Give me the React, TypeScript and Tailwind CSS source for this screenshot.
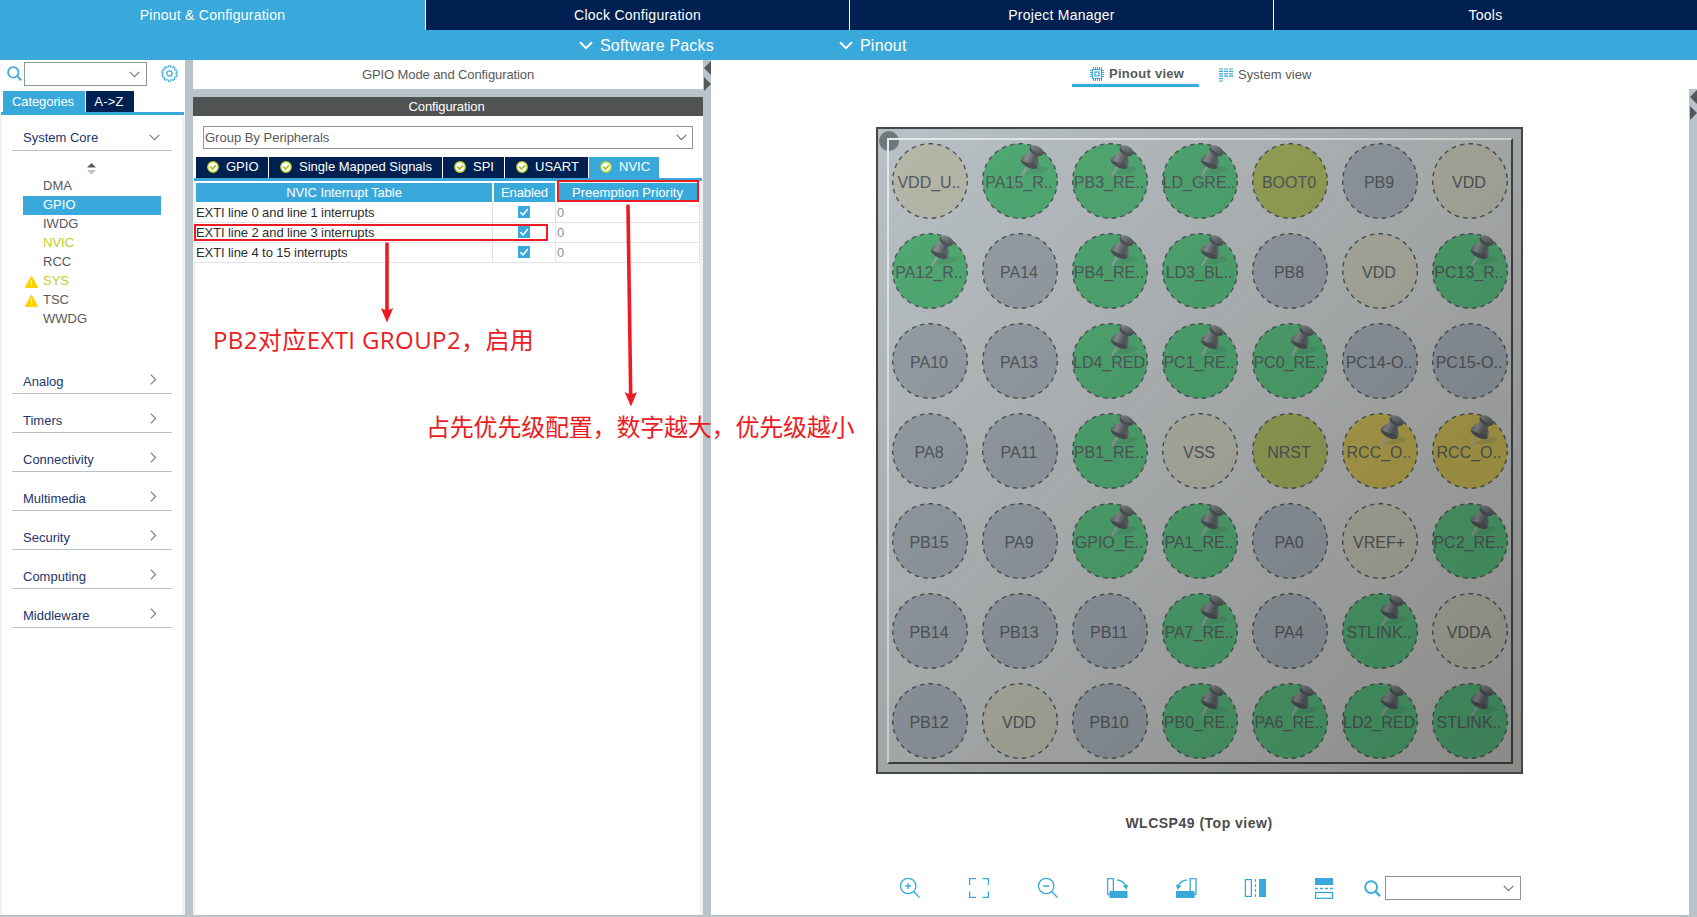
import type { ReactNode } from "react";
import clsx from "clsx";

const mainTabs = ["Clock Configuration", "Project Manager", "Tools"];

const coreItems = [
  { name: "DMA" },
  { name: "GPIO", selected: true },
  { name: "IWDG" },
  { name: "NVIC", configured: true },
  { name: "RCC" },
  { name: "SYS", configured: true, warning: true },
  { name: "TSC", warning: true },
  { name: "WWDG" },
];

const categories = ["Analog", "Timers", "Connectivity", "Multimedia", "Security", "Computing", "Middleware"];

const peripheralTabs = [
  { name: "GPIO", width: "w-[72px]" },
  { name: "Single Mapped Signals", width: "w-[173px]" },
  { name: "SPI", width: "w-[61px]" },
  { name: "USART", width: "w-[83px]" },
  { name: "NVIC", width: "w-[70px]", active: true },
];

const interrupts = [
  "EXTI line 0 and line 1 interrupts",
  "EXTI line 2 and line 3 interrupts",
  "EXTI line 4 to 15 interrupts",
];

// Fill per pin kind: free, used signal, power, boot/reset, reserved oscillator
const pinColors = {
  n: "#99a1a9",
  g: "#52ac75",
  p: "#b7b7aa",
  b: "#9ca859",
  o: "#bbab50",
};

type Kind = keyof typeof pinColors;

const pins: [string, Kind][] = [
  ["VDD_U..", "p"], ["PA15_R..", "g"], ["PB3_RE..", "g"], ["LD_GRE..", "g"], ["BOOT0", "b"], ["PB9", "n"], ["VDD", "p"],
  ["PA12_R..", "g"], ["PA14", "n"], ["PB4_RE..", "g"], ["LD3_BL..", "g"], ["PB8", "n"], ["VDD", "p"], ["PC13_R..", "g"],
  ["PA10", "n"], ["PA13", "n"], ["LD4_RED", "g"], ["PC1_RE..", "g"], ["PC0_RE..", "g"], ["PC14-O..", "n"], ["PC15-O..", "n"],
  ["PA8", "n"], ["PA11", "n"], ["PB1_RE..", "g"], ["VSS", "p"], ["NRST", "b"], ["RCC_O..", "o"], ["RCC_O..", "o"],
  ["PB15", "n"], ["PA9", "n"], ["GPIO_E..", "g"], ["PA1_RE..", "g"], ["PA0", "n"], ["VREF+", "p"], ["PC2_RE..", "g"],
  ["PB14", "n"], ["PB13", "n"], ["PB11", "n"], ["PA7_RE..", "g"], ["PA4", "n"], ["STLINK..", "g"], ["VDDA", "p"],
  ["PB12", "n"], ["VDD", "p"], ["PB10", "n"], ["PB0_RE..", "g"], ["PA6_RE..", "g"], ["LD2_RED", "g"], ["STLINK..", "g"],
];

function ChevronDown({ className }: { className?: string }) {
  return (
    <svg className={clsx("w-[11px] h-[7px] shrink-0", className)} viewBox="0 0 11 7" fill="none" stroke="currentColor">
      <path d="M0.7 0.8 L5.5 5.6 L10.3 0.8" strokeWidth="1.2" />
    </svg>
  );
}

function ChevronRight() {
  return (
    <svg className="w-[7px] h-[11px] text-[#7d7d7d]" viewBox="0 0 7 11" fill="none" stroke="currentColor" strokeWidth="1.2">
      <path d="M0.8 0.6 L5.6 5.5 L0.8 10.4" />
    </svg>
  );
}

function MenuChevron() {
  return (
    <svg className="w-[14px] h-[9px]" viewBox="0 0 14 9" fill="none" stroke="white" strokeWidth="2">
      <path d="M1 1.2 L7 7.2 L13 1.2" />
    </svg>
  );
}

function SearchIcon({ className }: { className?: string }) {
  return (
    <svg className={clsx("shrink-0", className)} viewBox="0 0 16 16" fill="none" stroke="#39a9dc" strokeWidth="1.8">
      <circle cx="6.7" cy="6.7" r="5.6" />
      <path d="M10.8 10.8 L15.2 15.2" strokeWidth="2.2" />
    </svg>
  );
}

function GearIcon() {
  const teeth = Array.from({ length: 10 }, (_, i) => i * 36);
  return (
    <svg className="w-[17px] h-[17px]" viewBox="0 0 17 17" fill="none" stroke="#39a9dc" strokeWidth="1.1">
      {teeth.map((a) => (
        <path key={a} d="M6.9 2.7 L7.4 0.8 H9.6 L10.1 2.7" transform={`rotate(${a} 8.5 8.5)`} />
      ))}
      <circle cx="8.5" cy="8.5" r="2.7" strokeWidth="1.2" />
    </svg>
  );
}

function WarningIcon() {
  return (
    <svg className="w-[13px] h-[12px]" viewBox="0 0 13 12">
      <path d="M6.5 0.8 L12.2 11.2 H0.8 Z" fill="#ffd200" stroke="#ffd200" strokeWidth="1.4" strokeLinejoin="round" />
      <path d="M6.5 4 V7.8 M6.5 8.8 V10" stroke="white" strokeWidth="1.1" />
    </svg>
  );
}

function CheckBadge() {
  return (
    <svg className="w-[12px] h-[12px] shrink-0" viewBox="0 0 12 12" fill="none">
      <circle cx="6" cy="6" r="5.2" fill="white" stroke="#bccf2b" strokeWidth="1.4" />
      <path d="M3.2 5.6 L5.5 8 L9 4.4" stroke="#a9bf1c" strokeWidth="1.6" />
    </svg>
  );
}

function Checkbox() {
  return (
    <svg className="w-[12px] h-[12px]" viewBox="0 0 12 12" fill="none">
      <rect width="12" height="12" fill="#39a9dc" />
      <path d="M2.4 6.3 L5 8.9 L9.8 3" stroke="white" strokeWidth="1.5" />
    </svg>
  );
}

function SplitArrows({ className }: { className?: string }) {
  return (
    <svg className={clsx("w-[8px] h-[32px]", className)} viewBox="0 0 8 32" fill="#54585b">
      <path d="M8 1 V15 L1 8 Z" />
      <path d="M1 17 V31 L8 24 Z" />
    </svg>
  );
}

function PushPin() {
  return (
    <svg className="absolute left-[44px] top-[8px] w-[32px] h-[34px]" viewBox="0 0 32 34">
      <defs>
        <linearGradient id="pinBody" x1="0" y1="0.2" x2="1" y2="0.6">
          <stop offset="0" stopColor="#4f5659" />
          <stop offset="0.35" stopColor="#8d9295" />
          <stop offset="0.7" stopColor="#565c5f" />
          <stop offset="1" stopColor="#6a7073" />
        </linearGradient>
        <linearGradient id="pinCap" x1="0" y1="0" x2="1" y2="0.4">
          <stop offset="0" stopColor="#8b9093" />
          <stop offset="1" stopColor="#5a6063" />
        </linearGradient>
      </defs>
      <path d="M5 31 L14 24 Q24 20 29 25 Q24 31 10 30 Z" fill="#3d5a4a" opacity="0.16" />
      <path d="M2.8 31.5 L8.5 22" stroke="#9ea3a6" strokeWidth="2" />
      <path
        d="M1.6 16 Q3.5 11 9 9.5 L11.5 5 L21.5 9.5 L18.6 14 Q21 20 18 24.5 Q12 26 6 21.8 Q2 19 1.6 16 Z"
        fill="url(#pinBody)"
      />
      <path d="M1.6 16 Q2 19 6 21.8 Q12 26 18 24.5 Q18.5 22.5 16 20.5 Q8 19 1.6 16 Z" fill="#4d5457" />
      <ellipse cx="17.4" cy="7" rx="7.4" ry="4.3" transform="rotate(26 17.4 7)" fill="#50575a" />
      <ellipse cx="18" cy="5.4" rx="6.6" ry="3.2" transform="rotate(26 18 5.4)" fill="url(#pinCap)" />
    </svg>
  );
}

function Pin({ label, kind }: { label: string; kind: Kind }) {
  return (
    <div className="relative w-[90px] h-[90px] flex items-center justify-center">
      <svg className="absolute left-[7px] top-[7px] w-[76px] h-[76px]" viewBox="0 0 76 76">
        <circle cx="38" cy="38" r="37.3" fill={pinColors[kind]} stroke="#4f5457" strokeWidth="1.4" strokeDasharray="4.5 4.2" />
      </svg>
      {(kind === "g" || kind === "o") && <PushPin />}
      <span className="relative top-[2px] right-[1px] text-[16px] leading-none text-[#545b5e] whitespace-nowrap">{label}</span>
    </div>
  );
}

function ToolIcon({ children }: { children: ReactNode }) {
  return (
    <svg className="w-[22px] h-[22px]" viewBox="0 0 22 22" fill="none" stroke="#39a9dc" strokeWidth="1.3">
      {children}
    </svg>
  );
}

function Header() {
  return (
    <header className="text-white">
      <div className="flex h-[30px] text-[14px] leading-[30px] tracking-[0.25px] text-center">
        <div className="w-[425px] bg-[#39a9dc]">Pinout &amp; Configuration</div>
        {mainTabs.map((tab) => (
          <div key={tab} className="w-[424px] bg-[#002052] border-l border-white">
            {tab}
          </div>
        ))}
      </div>
      <div className="flex h-[30px] items-center bg-[#39a9dc] pl-[579px] pt-[1px] text-[16px] tracking-[0.2px]">
        <div className="flex items-center gap-[7px] w-[260px]">
          <MenuChevron />
          <span>Software Packs</span>
        </div>
        <div className="flex items-center gap-[7px]">
          <MenuChevron />
          <span>Pinout</span>
        </div>
      </div>
    </header>
  );
}

function Sidebar() {
  return (
    <aside className="w-[185px] flex flex-col">
      <div className="flex items-start h-[31px] pt-[2px] pl-[7px]">
        <SearchIcon className="w-[15px] h-[15px] mt-[4px]" />
        <div className="ml-[2px] w-[123px] h-[24px] border border-[#8d969c] flex items-center justify-end pr-[6px]">
          <ChevronDown className="text-[#70777c]" />
        </div>
        <div className="ml-[14px] mt-[3px]">
          <GearIcon />
        </div>
      </div>
      <div className="flex gap-px pl-[3px] h-[21px] text-white text-[13px] leading-[21px] text-center">
        <div className="w-[82px] bg-[#39a9dc] tracking-[-0.1px] pr-[2px]">Categories</div>
        <div className="w-[48px] bg-[#002052] tracking-[0.2px] pr-[2px]">A-&gt;Z</div>
      </div>
      <div className="h-[3px] ml-[1px] mr-[1px] bg-[#39a9dc]" />
      <div className="grow border-l-2 border-r-[3px] border-[#f0f1f2] pl-[10px] pr-[10px]">
        <div className="h-[36px] border-b border-[#b5c1c8] flex items-center justify-between pl-[11px] pr-[12px] text-[13px] text-[#23356d]">
          <span className="pt-[11px]">System Core</span>
          <span className="pt-[9px]">
            <ChevronDown className="block text-[#7d7d7d]" />
          </span>
        </div>
        <div className="flex justify-center pt-[12px] h-[26px] pr-[1px]">
          <svg className="w-[9px] h-[12px]" viewBox="0 0 9 12">
            <path d="M4.5 0 L9 4.5 H0 Z" fill="#585858" />
            <path d="M0 7 H9 L4.5 11.5 Z" fill="#c0c0c0" />
          </svg>
        </div>
        {coreItems.map((item) => (
          <div
            key={item.name}
            className={clsx(
              "h-[19px] ml-[11px] w-[138px] flex items-center text-[13px] leading-[18px]",
              item.selected ? "bg-[#39a9dc] text-white" : item.configured ? "text-[#bccf2b]" : "text-[#58595b]"
            )}
          >
            <span className="w-[20px] pl-[2px] pt-px">{item.warning && <WarningIcon />}</span>
            <span className="h-[19px]">{item.name}</span>
          </div>
        ))}
        <div className="h-[26px]" />
        {categories.map((name) => (
          <div
            key={name}
            className="h-[39px] border-b border-[#b5c1c8] flex items-end justify-between pl-[11px] pr-[15px] text-[13px] leading-[15px] text-[#23356d]"
          >
            <span className="pb-[4px]">{name}</span>
            <span className="pb-[8px]">
              <ChevronRight />
            </span>
          </div>
        ))}
      </div>
    </aside>
  );
}

function ConfigPanel() {
  return (
    <section className="w-[510px] flex flex-col text-[13px]">
      <div className="h-[29px] leading-[29px] text-center text-[#58595b] tracking-[-0.1px]">GPIO Mode and Configuration</div>
      <div className="h-[8px] bg-[#b8c4ca]" />
      <div className="h-[19px] leading-[19px] bg-[#515252] text-white text-center tracking-[-0.1px] pr-[3px]">Configuration</div>
      <div className="mt-[10px] ml-[10px] w-[490px] h-[23px] border border-[#8d969c] flex items-center justify-between pl-[1px] pr-[5px] text-[#58595b]">
        <span>Group By Peripherals</span>
        <ChevronDown className="text-[#70777c]" />
      </div>
      <div className="mt-[8px] flex gap-px pl-[3px] text-white">
        {peripheralTabs.map((tab) => (
          <div
            key={tab.name}
            className={clsx(
              "h-[21px] flex items-center gap-[7px] pl-[11px] pb-px leading-[20px] whitespace-nowrap",
              tab.width,
              tab.active ? "bg-[#39a9dc]" : "bg-[#002052]"
            )}
          >
            <CheckBadge />
            <span>{tab.name}</span>
          </div>
        ))}
      </div>
      <div className="ml-[1px] mr-[1px] h-[3px] bg-[#39a9dc]" />
      <div className="grow border-l-2 border-r-[3px] border-[#f0f1f2] pt-[2px]">
        <div className="grid grid-cols-[296px_61px_141px] gap-[2px] pl-[1px] pb-[1px] text-white text-center leading-[19px]">
          <div className="bg-[#39a9dc] tracking-[-0.1px]">NVIC Interrupt Table</div>
          <div className="bg-[#39a9dc] tracking-[-0.1px]">Enabled</div>
          <div className="bg-[#39a9dc] tracking-[0.02px]">Preemption Priority</div>
        </div>
        {interrupts.map((name) => (
          <div
            key={name}
            className="grid grid-cols-[298px_63px_144px] h-[20px] border-b border-[#e1e4e6] leading-[19px] text-[#2e2e2e]"
          >
            <div className="pl-[1px] tracking-[-0.09px] border-r border-[#e1e4e6]">{name}</div>
            <div className="pl-[25px] pt-[3px] border-r border-[#e1e4e6]">
              <Checkbox />
            </div>
            <div className="pl-[1px] text-[#8f9396] border-r border-[#e1e4e6]">0</div>
          </div>
        ))}
      </div>
    </section>
  );
}

function Chip() {
  return (
    <div className="relative w-[647px] h-[647px] border-2 border-[#43484a] p-[7px] bg-linear-to-br from-[#b9c1c6] to-[#bdbdb9]">
      <div className="absolute left-[1px] top-[2px] w-[20px] h-[20px] rounded-full bg-[#71787d]" />
      <div className="absolute left-[9px] top-[9px] w-[626px] h-[626px] border-2 border-t-[#e6eaeb] border-l-[#e6eaeb] border-r-[#444849] border-b-[#444849]" />
      <div className="relative grid grid-cols-7 w-[630px]">
        {pins.map(([label, kind], i) => (
          <Pin key={i} label={label} kind={kind} />
        ))}
      </div>
      <div className="absolute inset-0 bg-linear-to-br from-black/0 to-black/27" />
    </div>
  );
}

function PinoutView() {
  return (
    <main className="w-[978px] pl-[165px] text-[13px] text-[#58595b]">
      <div className="flex pl-[196px] h-[27px]">
        <div className="w-[127px] border-b-[3px] border-[#39a9dc] flex items-center gap-[5px] pl-[18px] pt-[4px] font-bold tracking-[0.27px]">
          <svg className="w-[14px] h-[14px]" viewBox="0 0 14 14" fill="none" stroke="#39a9dc">
            <rect x="2.5" y="2.5" width="9" height="9" />
            <rect x="5" y="5" width="4" height="4" strokeWidth="1.2" />
            <path d="M3.5 0V2M5.5 0V2M7.5 0V2M9.5 0V2M11.5 0V2M3.5 12V14M5.5 12V14M7.5 12V14M9.5 12V14M11.5 12V14" />
            <path d="M0 3.5H2M0 5.5H2M0 7.5H2M0 9.5H2M12 3.5H14M12 5.5H14M12 7.5H14M12 9.5H14" />
          </svg>
          <span>Pinout view</span>
        </div>
        <div className="flex items-center gap-[5px] pl-[20px] pt-[2px] tracking-[0.05px]">
          <svg className="w-[14px] h-[14px]" viewBox="0 0 14 14" stroke="#39a9dc" strokeWidth="1.2">
            <path d="M0 1H4M5 1H9M10 1H14M0 3.4H4M5 3.4H9M10 3.4H14M0 5.8H4M5 5.8H9M10 5.8H14M0 8.2H4M5 8.2H9M10 8.2H14M0 10.6H4M0 13H4" />
          </svg>
          <span>System view</span>
        </div>
      </div>
      <div className="h-[40px]" />
      <Chip />
      <div className="mt-[41px] w-[646px] h-[18px] leading-[17px] text-center text-[14px] font-bold tracking-[0.5px] text-[#4c4c4c]">
        WLCSP49 (Top view)
      </div>
      <div className="flex items-center mt-[43px] h-[24px] pl-[23px]">
        <div className="flex gap-[47px]">
          <ToolIcon>
            <circle cx="9.2" cy="9" r="7.7" />
            <path d="M6.2 9H12.2M9.2 6V12M14.6 14.5L20.5 20.5" />
          </ToolIcon>
          <ToolIcon>
            <path d="M1.6 8V1.6H8M14.5 1.6H20.4V8M20.4 14.5V20.4H14.5M8 20.4H1.6V14.5" />
          </ToolIcon>
          <ToolIcon>
            <circle cx="9.2" cy="9" r="7.7" />
            <path d="M6.2 9H12.2M14.6 14.5L20.5 20.5" />
          </ToolIcon>
          <ToolIcon>
            <path d="M1.6 17.5V1.6H7.4V14M1.6 17.5H4" />
            <rect x="3.5" y="14" width="18" height="7" fill="#39a9dc" stroke="none" />
            <path d="M11 3Q18 3.5 19.6 9.5" />
            <path d="M16.8 8.5L22 7.5L20.6 13Z" fill="#39a9dc" stroke="none" />
          </ToolIcon>
          <ToolIcon>
            <path d="M21 17.5V1.6H15.2V14M21 17.5H19" />
            <rect x="1" y="14" width="18.5" height="7" fill="#39a9dc" stroke="none" />
            <path d="M12 3Q5 3.5 3.3 9.5" />
            <path d="M6.3 8.5L0.9 7.5L2.5 13Z" fill="#39a9dc" stroke="none" />
          </ToolIcon>
          <ToolIcon>
            <rect x="1.4" y="2.6" width="6" height="16.8" />
            <path d="M11.5 2V20" strokeDasharray="3 2" />
            <rect x="15" y="2" width="7" height="18" fill="#39a9dc" stroke="none" />
          </ToolIcon>
          <ToolIcon>
            <rect x="2" y="1" width="18" height="7" fill="#39a9dc" stroke="none" />
            <path d="M2 11.5H20" strokeDasharray="3 2" />
            <rect x="2.6" y="15.5" width="16.8" height="5.8" />
          </ToolIcon>
        </div>
        <SearchIcon className="w-[17px] h-[17px] ml-[29px]" />
        <div className="ml-[4px] w-[136px] h-[24px] border border-[#8d969c] flex items-center justify-end pr-[6px]">
          <ChevronDown className="text-[#70777c]" />
        </div>
      </div>
    </main>
  );
}

// Red markup drawn over the panels
function Annotations() {
  return (
    <div className="absolute inset-0 pointer-events-none text-[#ed1c24] font-['Open_Sans','Noto_Sans_CJK_SC',sans-serif] text-[24px] leading-[30px] whitespace-nowrap">
      <div className="absolute left-[557px] top-[180px] w-[142px] h-[22px] border-2 border-[#ed1c24]" />
      <div className="absolute left-[194px] top-[224px] w-[354px] h-[17px] border-2 border-[#ed1c24]" />
      <svg className="absolute inset-0 w-full h-full" fill="#ed1c24" stroke="#ed1c24" strokeLinecap="round">
        <path d="M387 244V312" strokeWidth="3.6" />
        <path d="M380.8 308Q387 312 393.2 308L387 322.5Z" stroke="none" />
        <path d="M628 206L630.7 396" strokeWidth="3.6" />
        <path d="M624.5 392Q631 396 637 392L631 406.5Z" stroke="none" />
      </svg>
      <div className="absolute left-[213px] top-[325px] tracking-[0.4px]">PB2对应EXTI GROUP2，启用</div>
      <div className="absolute left-[426px] top-[412px] tracking-[-0.2px]">占先优先级配置，数字越大，优先级越小</div>
    </div>
  );
}

export default function App() {
  return (
    <div className="relative w-[1697px] h-[917px] overflow-hidden flex flex-col bg-white font-['Liberation_Sans',Arial,sans-serif]">
      <Header />
      <div className="flex grow border-b-2 border-[#b8c4ca]">
        <Sidebar />
        <div className="w-[8px] bg-[#b8c4ca]" />
        <ConfigPanel />
        <div className="w-[8px] bg-[#b8c4ca]">
          <SplitArrows />
        </div>
        <PinoutView />
        <div className="mt-[29px] w-[8px] bg-[#b8c4ca]">
          <SplitArrows />
        </div>
      </div>
      <Annotations />
    </div>
  );
}
